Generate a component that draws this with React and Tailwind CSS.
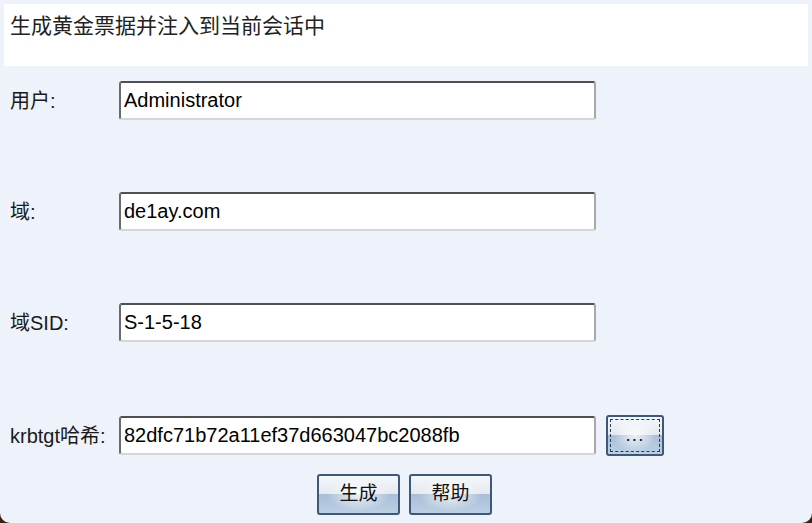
import { useState } from 'react';

const fields = [
  { key: 'user', label: '用户:', value: 'Administrator' },
  { key: 'domain', label: '域:', value: 'de1ay.com' },
  { key: 'sid', label: '域SID:', value: 'S-1-5-18' },
  { key: 'hash', label: 'krbtgt哈希:', value: '82dfc71b72a11ef37d663047bc2088fb', browse: true },
];

const btnBg =
  'bg-[radial-gradient(ellipse_40%_45%_at_50%_50%,rgba(255,255,255,0.8),rgba(255,255,255,0)),linear-gradient(to_bottom,#f5f7fa_0%,#e3e9f0_48%,#a9bfd9_50%,#bccfe3_100%)]';

function GlassButton({ children, focused, className = '' }) {
  return (
    <button
      className={`relative h-[41px] rounded-[3px] border-2 border-[#3d5878] ${btnBg} text-[19px] text-[#111] flex items-center justify-center ${className}`}
    >
      {focused && (
        <span className="absolute inset-[2px] border border-dashed border-[#2a3a50] pointer-events-none" />
      )}
      {children}
    </button>
  );
}

export default function App() {
  const [values, setValues] = useState(
    Object.fromEntries(fields.map((f) => [f.key, f.value]))
  );

  return (
    <div
      className="w-[812px] h-[523px] bg-[#3a2114] overflow-hidden"
      style={{ fontFamily: '"Liberation Sans", "Noto Sans CJK SC", sans-serif' }}
    >
      <div className="h-full bg-[#eef2fa] rounded-b-[10px] px-[4px] pt-[4px] flex flex-col">
        {/* Title */}
        <div className="h-[62px] bg-white pl-[6px] pt-[8px] text-[21px] leading-[28px] text-[#222]">
          生成黄金票据并注入到当前会话中
        </div>

        {/* Form rows */}
        <div className="flex flex-col gap-[72px] mt-[15px]">
          {fields.map((f, i) => (
            <div
              key={f.key}
              className={`flex items-center h-[39px] ${i === 3 ? 'mt-[2px]' : ''}`}
            >
              <label className="w-[115px] pl-[6px] text-[20px] text-[#1a1a1a] whitespace-nowrap">
                {f.label}
              </label>
              <input
                value={values[f.key]}
                onChange={(e) => setValues({ ...values, [f.key]: e.target.value })}
                className="w-[477px] h-[39px] rounded-[3px] border-2 border-t-[#505050] border-l-[#6a6a6a] border-r-[#a8a8a8] border-b-[#d6d6d6] bg-white pl-[3px] text-[20px] text-black outline-none"
              />
              {f.browse && (
                <GlassButton focused className="ml-[10px] w-[58px] tracking-[1px]">
                  ...
                </GlassButton>
              )}
            </div>
          ))}
        </div>

        {/* Actions */}
        <div className="flex justify-center gap-[9px] mt-[19px] pr-[3px]">
          <GlassButton className="w-[83px]">生成</GlassButton>
          <GlassButton className="w-[83px]">帮助</GlassButton>
        </div>
      </div>
    </div>
  );
}
